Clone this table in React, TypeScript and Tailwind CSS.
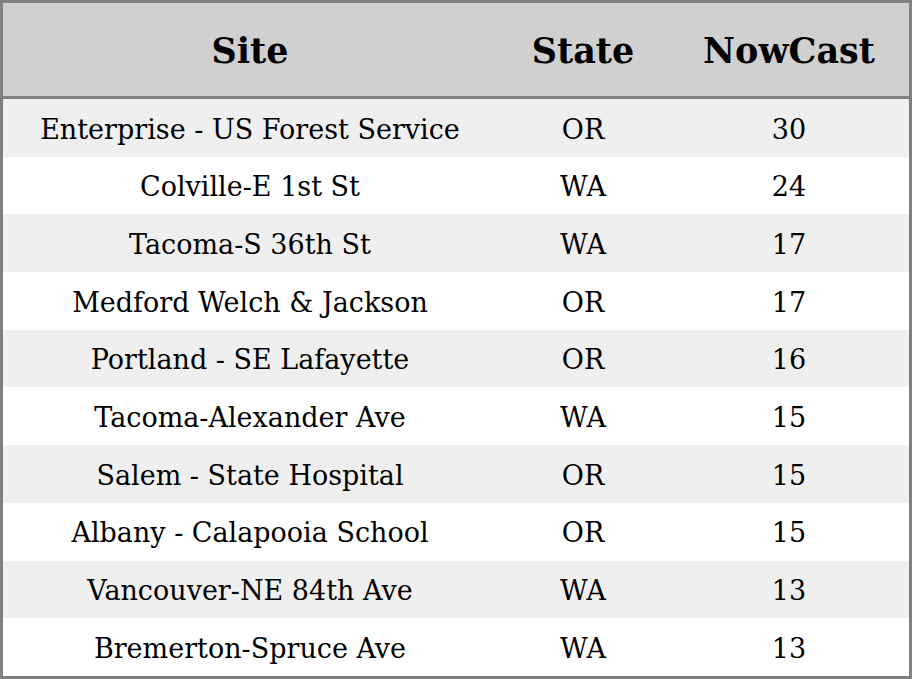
import React from 'react';

const rows = [
  { site: 'Enterprise - US Forest Service', state: 'OR', nowcast: 30 },
  { site: 'Colville-E 1st St', state: 'WA', nowcast: 24 },
  { site: 'Tacoma-S 36th St', state: 'WA', nowcast: 17 },
  { site: 'Medford Welch & Jackson', state: 'OR', nowcast: 17 },
  { site: 'Portland - SE Lafayette', state: 'OR', nowcast: 16 },
  { site: 'Tacoma-Alexander Ave', state: 'WA', nowcast: 15 },
  { site: 'Salem - State Hospital', state: 'OR', nowcast: 15 },
  { site: 'Albany - Calapooia School', state: 'OR', nowcast: 15 },
  { site: 'Vancouver-NE 84th Ave', state: 'WA', nowcast: 13 },
  { site: 'Bremerton-Spruce Ave', state: 'WA', nowcast: 13 },
];

export default function App() {
  return (
    <div className="w-[912px] h-[679px] bg-white font-['DejaVu_Serif',serif] text-black">
      <div className="h-full border-[3px] border-[#808080] flex flex-col">
        <div className="h-[89px] pt-[4px] bg-[#d0d0d0] border-b-[3px] border-[#808080] flex items-center text-[35px] font-bold box-content">
          <div className="w-[494px] text-center">Site</div>
          <div className="w-[172px] text-center">State</div>
          <div className="flex-1 text-center">NowCast</div>
        </div>
        {rows.map((r, i) => (
          <div
            key={r.site}
            className={`h-[57.7px] pt-[4px] flex items-center text-[27px] ${i % 2 === 0 ? 'bg-[#efefef]' : 'bg-white'}`}
          >
            <div className="w-[494px] text-center">{r.site}</div>
            <div className="w-[172px] text-center">{r.state}</div>
            <div className="flex-1 text-center">{r.nowcast}</div>
          </div>
        ))}
      </div>
    </div>
  );
}
